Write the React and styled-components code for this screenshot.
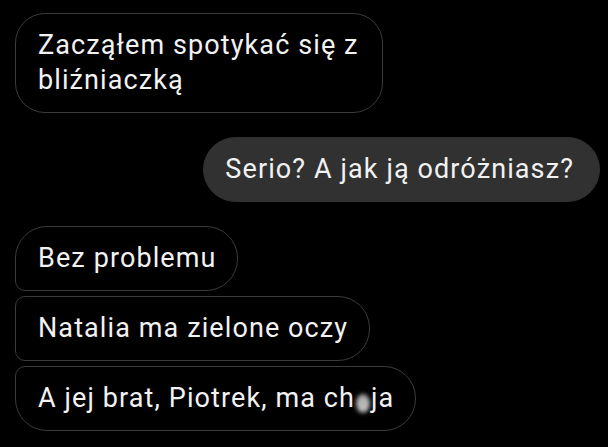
import React from "react";
import styled, { createGlobalStyle } from "styled-components";

const Global = createGlobalStyle`
  html, body { margin: 0; background: #000; }
  body { font-family: Roboto, "Noto Sans", sans-serif; -webkit-font-smoothing: antialiased; }
`;

const Thread = styled.div`
  display: flex; flex-direction: column;
  padding: 13px 8px 0 15px;
  width: 608px; height: 447px; box-sizing: border-box;
  overflow: hidden;
`;

const Group = styled.div`
  display: flex; flex-direction: column; gap: 5px;
  align-items: ${(p) => (p.$mine ? "flex-end" : "flex-start")};
  margin-bottom: 24px;
`;

const radius = {
  solo: "30px",
  first: "32px 32px 32px 10px",
  middle: "10px 32px 32px 10px",
  last: "10px 32px 32px 32px",
};

const Bubble = styled.div`
  box-sizing: border-box;
  width: ${(p) => p.$width || "auto"};
  padding: 14px 21px 14px 22px;
  font-size: 27px; line-height: 35px;
  letter-spacing: 1.1px;
  color: #f2f2f2;
  border-radius: ${(p) => radius[p.$shape || "solo"]};
  border: 1.5px solid ${(p) => (p.$mine ? "#313131" : "#3b3b3b")};
  background: ${(p) => (p.$mine ? "#313131" : "#000")};
  ${(p) => p.$mine && "border-radius: 33px; padding: 14px 25px 14px 21px;"}
`;

const Censored = styled.span`
  display: inline-block;
  width: 14px; height: 19px;
  vertical-align: -3px;
  margin: 0 1px;
  border-radius: 50%;
  background: #a8a8a8;
  color: #e0e0e0;
  font-size: 18px; line-height: 19px; text-align: center;
  letter-spacing: 0;
  filter: blur(2px);
`;

export default function App() {
  return (
    <>
      <Global />
      <Thread>
        <Group>
          <Bubble $width="368px">Zacząłem spotykać się z bliźniaczką</Bubble>
        </Group>
        <Group $mine>
          <Bubble $mine>Serio? A jak ją odróżniasz?</Bubble>
        </Group>
        <Group>
          <Bubble $shape="first">Bez problemu</Bubble>
          <Bubble $shape="middle">Natalia ma zielone oczy</Bubble>
          <Bubble $shape="last">
            A jej brat, Piotrek, ma ch<Censored>u</Censored>ja
          </Bubble>
        </Group>
      </Thread>
    </>
  );
}
